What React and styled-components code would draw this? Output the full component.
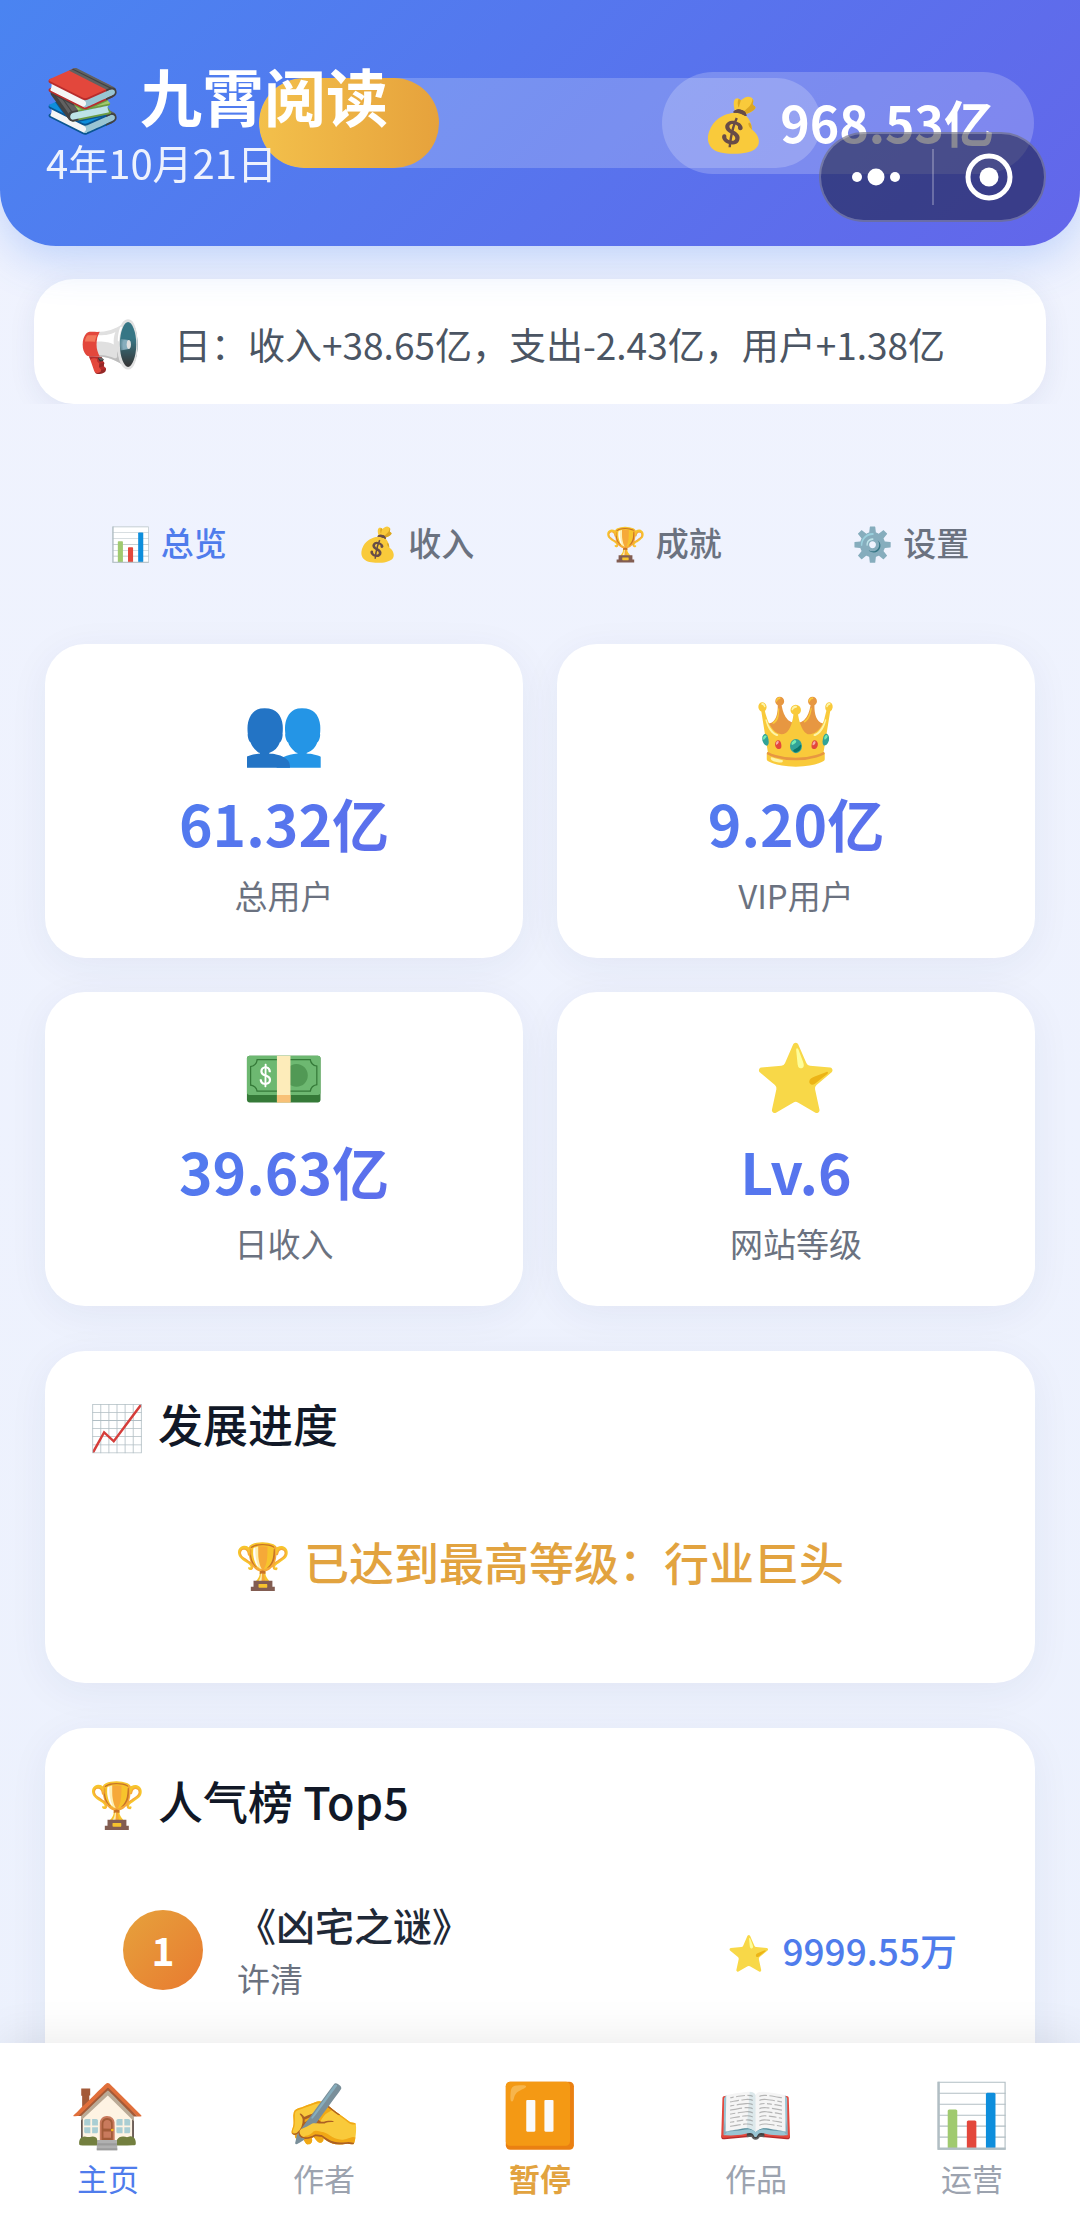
import React from "react";
import styled, { createGlobalStyle } from "styled-components";

const GlobalStyle = createGlobalStyle`
  *, *::before, *::after { box-sizing: border-box; }
  body { margin: 0; background: #eef2fe; }
  button { font: inherit; border: 0; padding: 0; background: none; color: inherit; cursor: pointer; }
  h1, h2, p, ol { margin: 0; padding: 0; }
`;

const Page = styled.div`
  display: flex;
  flex-direction: column;
  height: 100vh;
  overflow: hidden;
  background: linear-gradient(180deg, #f0f3fe 0%, #ecf1fd 100%);
  font-family: "Noto Sans CJK SC", "Noto Color Emoji", sans-serif;
  color: #111827;
`;

const Header = styled.header`
  position: relative;
  z-index: 1;
  flex: none;
  display: flex;
  justify-content: space-between;
  align-items: center;
  height: 246px;
  padding: 0 46px;
  border-radius: 0 0 56px 56px;
  background: linear-gradient(135deg, #4a84f1 0%, #6366ea 100%);
  box-shadow: 0 12px 46px rgba(74, 132, 241, 0.3);
  color: #fff;
`;

const Progress = styled.div`
  position: absolute;
  top: 78px;
  left: 24%;
  right: 24%;
  height: 90px;
  border-radius: 45px;
  background: rgba(255, 255, 255, 0.2);
  overflow: hidden;
`;

const ProgressFill = styled.div`
  height: 100%;
  border-radius: 45px;
  background: linear-gradient(90deg, #f3c04b, #e6a23c);
`;

const Brand = styled.div`
  position: relative;
  display: flex;
  flex-direction: column;
  gap: 4px;
`;

const Title = styled.h1`
  display: flex;
  align-items: center;
  gap: 20px;
  font-size: 62px;
  line-height: 72px;
  font-weight: 700;
`;

const DateText = styled.p`
  font-size: 40px;
  line-height: 52px;
  opacity: 0.9;
`;

const Money = styled.div`
  position: relative;
  display: flex;
  align-items: center;
  gap: 16px;
  height: 102px;
  padding: 0 40px 4px;
  border-radius: 51px;
  background: rgba(255, 255, 255, 0.2);
  font-size: 50px;
  font-weight: 700;
`;

const Capsule = styled.div`
  position: absolute;
  top: 132px;
  right: 34px;
  display: flex;
  align-items: center;
  width: 227px;
  height: 90px;
  border: 2px solid rgba(255, 255, 255, 0.25);
  border-radius: 45px;
  background: rgba(18, 18, 40, 0.5);
`;

const CapsuleButton = styled.button`
  flex: 1;
  display: flex;
  justify-content: center;
  align-items: center;
  height: 56px;
  & + & { border-left: 2px solid rgba(255, 255, 255, 0.25); }
`;

const NoticeArea = styled.div`
  flex: none;
  padding: 33px 34px 0;
  overflow: hidden;
`;

const Notice = styled.div`
  display: flex;
  align-items: center;
  gap: 34px;
  height: 125px;
  padding: 0 46px;
  border-radius: 40px;
  background: #fff;
  box-shadow: 0 6px 28px rgba(40, 50, 110, 0.08);
  font-size: 37px;
  color: #4b5563;
`;

const NoticeText = styled.p`
  padding-top: 4px;
  white-space: nowrap;
`;

const Main = styled.main`
  flex: 1;
  min-height: 0;
  overflow: hidden;
  display: flex;
  flex-direction: column;
  padding: 87px 45px 0;
`;

const Tabs = styled.nav`
  flex: none;
  display: grid;
  grid-template-columns: repeat(4, 1fr);
`;

const Tab = styled.button`
  display: flex;
  justify-content: center;
  align-items: center;
  gap: 10px;
  height: 102px;
  font-size: 33px;
  font-weight: 500;
  color: ${(p) => (p.$active ? "#4f7cec" : "#6b7280")};
`;

const Stats = styled.section`
  flex: none;
  display: grid;
  grid-template-columns: 1fr 1fr;
  gap: 34px;
  margin-top: 51px;
`;

const Card = styled.section`
  flex: none;
  border-radius: 40px;
  background: #fff;
  box-shadow: 0 8px 40px rgba(40, 50, 110, 0.06);
`;

const StatCard = styled(Card)`
  display: flex;
  flex-direction: column;
  align-items: center;
  height: 314px;
  padding-top: 40px;
`;

const StatValue = styled.div`
  align-self: stretch;
  margin-top: 22px;
  text-align: center;
  font-size: 57px;
  line-height: 72px;
  font-weight: 700;
  background: linear-gradient(135deg, #4a84f1, #6366ea);
  background-clip: text;
  color: transparent;
`;

const StatLabel = styled.div`
  margin-top: 13px;
  font-size: 33px;
  line-height: 48px;
  color: #6b7280;
`;

const Panel = styled(Card)`
  margin-top: 45px;
  padding: 42px 45px 45px;
`;

const PanelTitle = styled.h2`
  display: flex;
  align-items: center;
  gap: 14px;
  font-size: 45px;
  line-height: 62px;
  font-weight: 500;
`;

const MaxLevel = styled.p`
  display: flex;
  justify-content: center;
  align-items: center;
  gap: 14px;
  padding: 76px 0 45px;
  font-size: 45px;
  line-height: 62px;
  font-weight: 500;
  color: #e2a33f;
`;

const Ranking = styled.ol`
  list-style: none;
  padding: 64px 33px 90px;
`;

const RankItem = styled.li`
  display: flex;
  align-items: center;
  gap: 34px;
`;

const RankBadge = styled.span`
  display: flex;
  justify-content: center;
  align-items: center;
  width: 80px;
  height: 80px;
  padding-bottom: 3px;
  border-radius: 50%;
  background: linear-gradient(135deg, #e6a23c, #e87a30);
  color: #fff;
  font-size: 39px;
  font-weight: 700;
`;

const RankBook = styled.div`
  flex: 1;
`;

const BookName = styled.div`
  font-size: 39px;
  line-height: 56px;
  font-weight: 500;
  color: #1f2937;
`;

const BookAuthor = styled.div`
  font-size: 33px;
  line-height: 52px;
  color: #6b7280;
`;

const RankScore = styled.div`
  display: flex;
  align-items: center;
  gap: 12px;
  font-size: 37px;
  font-weight: 500;
  color: #4f7cec;
`;

const BottomNav = styled.nav`
  position: relative;
  z-index: 1;
  flex: none;
  display: grid;
  grid-template-columns: repeat(5, 1fr);
  height: 185px;
  background: #fff;
  box-shadow: 0 -6px 40px rgba(0, 0, 0, 0.08);
`;

const NavButton = styled.button`
  display: flex;
  flex-direction: column;
  align-items: center;
  gap: 11px;
  padding-top: 30px;
  font-size: 31px;
  line-height: 40px;
  font-weight: ${(p) => (p.$tone === "pause" ? 700 : 400)};
  color: ${(p) => ({ active: "#4f7cec", pause: "#e2a33f" }[p.$tone] || "#9ca3af")};
`;

const EmojiBox = styled.span`
  display: inline-flex;
  justify-content: center;
  align-items: center;
  width: ${(p) => p.$size}px;
  height: ${(p) => p.$size}px;
  font-size: ${(p) => Math.round(p.$size / 1.2)}px;
  font-weight: 400;
  line-height: 1;
  filter: saturate(0.88);
`;

const Emoji = ({ size, children }) => (
  <EmojiBox $size={size} aria-hidden="true">{children}</EmojiBox>
);

const tabs = [["📊", "总览"], ["💰", "收入"], ["🏆", "成就"], ["⚙️", "设置"]];
const stats = [
  ["👥", "61.32亿", "总用户"],
  ["👑", "9.20亿", "VIP用户"],
  ["💵", "39.63亿", "日收入"],
  ["⭐", "Lv.6", "网站等级"],
];
const navItems = [
  ["🏠", "主页", "active"],
  ["✍️", "作者"],
  ["⏸️", "暂停", "pause"],
  ["📖", "作品"],
  ["📊", "运营"],
];

export default function App() {
  return (
    <Page>
      <GlobalStyle />
      <Header>
        <Progress><ProgressFill style={{ width: "32%" }} /></Progress>
        <Brand>
          <Title><Emoji size={74}>📚</Emoji>九霄阅读</Title>
          <DateText>4年10月21日</DateText>
        </Brand>
        <Money><Emoji size={62}>💰</Emoji>968.53亿</Money>
        <Capsule>
          <CapsuleButton aria-label="更多">
            <svg width="48" height="18" viewBox="0 0 48 18" fill="#fff">
              <circle cx="5" cy="9" r="5" /><circle cx="24" cy="9" r="8.5" /><circle cx="43" cy="9" r="5" />
            </svg>
          </CapsuleButton>
          <CapsuleButton aria-label="关闭">
            <svg width="48" height="48" viewBox="0 0 48 48">
              <circle cx="24" cy="24" r="21" fill="none" stroke="#fff" strokeWidth="5" />
              <circle cx="24" cy="24" r="9.5" fill="#fff" />
            </svg>
          </CapsuleButton>
        </Capsule>
      </Header>
      <NoticeArea>
        <Notice>
          <Emoji size={60}>📢</Emoji>
          <NoticeText>日：收入+38.65亿，支出-2.43亿，用户+1.38亿</NoticeText>
        </Notice>
      </NoticeArea>
      <Main>
        <Tabs>
          {tabs.map(([icon, label], i) => (
            <Tab key={label} $active={i === 0}><Emoji size={40}>{icon}</Emoji>{label}</Tab>
          ))}
        </Tabs>
        <Stats>
          {stats.map(([icon, value, label]) => (
            <StatCard key={label} as="div">
              <Emoji size={80}>{icon}</Emoji>
              <StatValue>{value}</StatValue>
              <StatLabel>{label}</StatLabel>
            </StatCard>
          ))}
        </Stats>
        <Panel>
          <PanelTitle><Emoji size={54}>📈</Emoji>发展进度</PanelTitle>
          <MaxLevel><Emoji size={54}>🏆</Emoji>已达到最高等级：行业巨头</MaxLevel>
        </Panel>
        <Panel>
          <PanelTitle><Emoji size={54}>🏆</Emoji>人气榜 Top5</PanelTitle>
          <Ranking>
            <RankItem>
              <RankBadge>1</RankBadge>
              <RankBook>
                <BookName>《凶宅之谜》</BookName>
                <BookAuthor>许清</BookAuthor>
              </RankBook>
              <RankScore><Emoji size={42}>⭐</Emoji>9999.55万</RankScore>
            </RankItem>
          </Ranking>
        </Panel>
      </Main>
      <BottomNav>
        {navItems.map(([icon, label, tone]) => (
          <NavButton key={label} $tone={tone}><Emoji size={74}>{icon}</Emoji>{label}</NavButton>
        ))}
      </BottomNav>
    </Page>
  );
}
